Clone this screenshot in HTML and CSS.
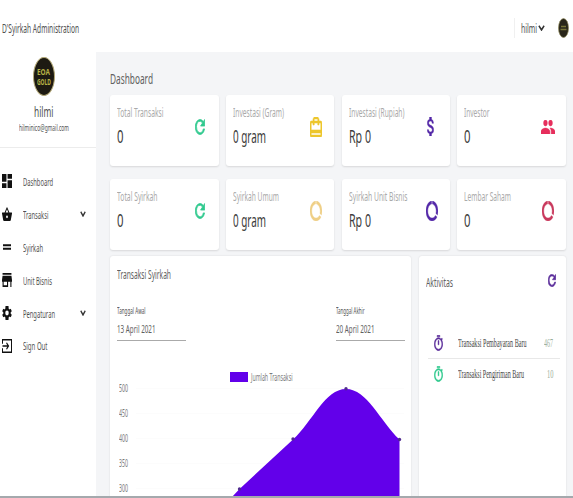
FILE: index.html
```html
<!DOCTYPE html>
<html lang="id">
<head>
<meta charset="utf-8">
<title>D'Syirkah Administration</title>
<link rel="stylesheet" href="styles.css">
</head>
<body>
<svg class="defs" aria-hidden="true">
  <symbol id="refresh" viewBox="3.500 3.500 17 17" preserveAspectRatio="none"><path stroke="currentColor" stroke-width="1" d="M17.65 6.35C16.2 4.9 14.21 4 12 4a8 8 0 1 0 7.73 10h-2.08A6 6 0 1 1 12 6c1.66 0 3.14.69 4.22 1.78L13 11h7V4z"/></symbol>
  <symbol id="ring" viewBox="2 2 20 20" preserveAspectRatio="none"><path stroke="currentColor" stroke-width=".4" d="M12.700 2.05v3.03c3.390.49 6.300 3.390 6.300 6.920 0 .9-.18 1.75-.48 2.54l2.6 1.53c.56-1.24.88-2.62.88-4.07 0-5.18-3.95-9.45-9.300-9.95zM12 19c-3.87 0-7-3.13-7-7 0-3.53 2.61-6.43 6.300-6.920V2.05c-5.360.5-9.300 4.76-9.300 9.950 0 5.52 4.470 10 9.990 10 3.310 0 6.540-1.610 8.360-4.090l-2.600-1.530A6.95 6.95 0 0 1 12 19z"/></symbol>
  <symbol id="bag" viewBox="2 2 20 20" preserveAspectRatio="none"><path fill-rule="evenodd" stroke="currentColor" stroke-width=".7" d="M20 6h-3V4l-2-2H9L7 4v2H4a2 2 0 0 0-2 2v12c0 1.1.9 2 2 2h16a2 2 0 0 0 2-2V8a2 2 0 0 0-2-2zM9 4h6v2H9zm11 15v1H4v-2h16zm0-4H4V8h3v2h2V8h6v2h2V8h3z"/></symbol>
  <symbol id="dollar" viewBox="6 3 11 18" preserveAspectRatio="none"><path stroke="currentColor" stroke-width=".5" d="M11.8 10.9c-2.27-.59-3-1.2-3-2.15 0-1.09 1.01-1.85 2.7-1.85 1.78 0 2.44.85 2.5 2.1h2.21c-.07-1.72-1.12-3.3-3.21-3.81V3h-3v2.16c-1.94.42-3.5 1.68-3.5 3.61 0 2.31 1.91 3.46 4.7 4.13 2.5.6 3 1.48 3 2.41 0 .69-.49 1.79-2.7 1.79-2.06 0-2.87-.92-2.98-2.1H6.32c.12 2.19 1.76 3.42 3.68 3.83V21h3v-2.15c1.95-.37 3.5-1.5 3.5-3.55 0-2.84-2.43-3.81-4.7-4.4z"/></symbol>
  <symbol id="people" viewBox="1 5 22 14" preserveAspectRatio="none"><path stroke="currentColor" stroke-width=".5" d="M16 11a3 3 0 1 0 0-6 3 3 0 0 0 0 6zm-8 0a3 3 0 1 0 0-6 3 3 0 0 0 0 6zm0 2c-2.33 0-7 1.17-7 3.5V19h14v-2.5C15 14.17 10.33 13 8 13zm8 0c-.29 0-.62.02-.97.05 1.16.84 1.97 1.97 1.97 3.45V19h6v-2.5c0-2.33-4.67-3.5-7-3.5z"/></symbol>
  <symbol id="timer" viewBox="2.500 .5 19 22" preserveAspectRatio="none"><path fill-rule="evenodd" stroke="currentColor" stroke-width=".7" d="M15 1H9v2h6zm-4 13h2V8h-2zm8.03-6.61 1.42-1.42c-.43-.51-.9-.99-1.41-1.41l-1.42 1.42A9 9 0 1 0 19.03 7.39zM12 20a7 7 0 1 1 0-14 7 7 0 0 1 0 14z"/></symbol>
  <symbol id="chevron" viewBox="0 0 12 8" preserveAspectRatio="none"><path d="M1.500 1l4.500 5.500L10.500 1" fill="none" stroke="#333" stroke-width="2.600"/></symbol>
</svg>

<header class="topbar">
  <span class="brand fit" data-w="77">D'Syirkah Administration</span>
  <div class="account">
    <span class="fit" data-w="16">hilmi</span>
    <svg class="chev"><use href="#chevron"/></svg>
    <svg class="avatar" viewBox="0 0 11 20"><ellipse cx="5.500" cy="10" rx="5" ry="9.500" fill="#29261a" stroke="#8f8a5c" stroke-width=".7"/><path d="M3 8.500h5M2.500 11.500h6" stroke="#777438" stroke-width="1.500"/></svg>
  </div>
</header>

<div class="shell">
  <aside class="sidebar">
    <div class="profile">
      <div class="logo"><span class="fit" data-w="13">EOA</span><span class="fit" data-w="14">GOLD</span></div>
      <div class="name"><span class="fit" data-w="19.5">hilmi</span></div>
      <div class="mail"><span class="fit" data-w="50">hilminico@gmail.com</span></div>
    </div>
    <nav class="nav">
      <a><svg viewBox="3 3 18 18" preserveAspectRatio="none"><path d="M3 13h8V3H3zm0 8h8v-6H3zm10 0h8V11h-8zm0-18v6h8V3z"/></svg><span class="fit" data-w="30">Dashboard</span></a>
      <a><svg viewBox="1 1 22 20" preserveAspectRatio="none"><path fill-rule="evenodd" d="M17.2 9 12.8 1.8a1 1 0 0 0-1.6 0L6.8 9H2a1 1 0 0 0-1 1.3l2.6 9.2C3.800 20.400 4.600 21 5.500 21h13c.9 0 1.700-.6 1.900-1.500L23 10.300A1 1 0 0 0 22 9zM9 9l3-4.700L15 9zm3 8a2 2 0 1 1 0-4 2 2 0 0 1 0 4z"/></svg><span class="fit" data-w="25.500">Transaksi</span><svg class="chev"><use href="#chevron"/></svg></a>
      <a><svg viewBox="2 2 20 20" preserveAspectRatio="none"><path d="M4 8h16v2.800H4zm0 5.200h16V16H4z"/></svg><span class="fit" data-w="20">Syirkah</span></a>
      <a><svg viewBox="3 4 18 16" preserveAspectRatio="none"><path fill-rule="evenodd" d="M20 4H4v2h16zm1 10v-2l-1-5H4l-1 5v2h1v6h10v-6h4v6h2v-6zm-9 4H6v-4h6z"/></svg><span class="fit" data-w="29">Unit Bisnis</span></a>
      <a><svg viewBox="2 2 20 20" preserveAspectRatio="none"><path fill-rule="evenodd" d="M19.430 12.980a8 8 0 0 0 0-1.960l2.110-1.650-2-3.460-2.490 1a8 8 0 0 0-1.690-.98L15 2H9l-.360 3.930a8 8 0 0 0-1.690.980l-2.490-1-2 3.460 2.110 1.650a8 8 0 0 0 0 1.960l-2.110 1.650 2 3.460 2.490-1a8 8 0 0 0 1.690.980L9 22h6l.360-3.930a8 8 0 0 0 1.690-.980l2.490 1 2-3.460zM12 15.500a3.500 3.500 0 1 1 0-7 3.500 3.500 0 0 1 0 7z"/></svg><span class="fit" data-w="32">Pengaturan</span><svg class="chev"><use href="#chevron"/></svg></a>
      <a><svg viewBox="2 3 20 18" preserveAspectRatio="none"><path d="M3 9V4h18v16H3v-5M3 12h12M11 8l4 4-4 4" fill="none" stroke="#111" stroke-width="2"/></svg><span class="fit" data-w="24.500">Sign Out</span></a>
    </nav>
  </aside>

  <main class="content">
    <h1><span class="fit" data-w="43">Dashboard</span></h1>
    <section class="stats">
      <article class="card"><div><p><span class="fit" data-w="46.500">Total Transaksi</span></p><b><span class="fit" data-w="6.500">0</span></b></div><svg class="turn green"><use href="#refresh"/></svg></article>
      <article class="card"><div><p><span class="fit" data-w="51">Investasi (Gram)</span></p><b><span class="fit" data-w="33">0 gram</span></b></div><svg class="yellow"><use href="#bag"/></svg></article>
      <article class="card"><div><p><span class="fit" data-w="55.500">Investasi (Rupiah)</span></p><b><span class="fit" data-w="22">Rp 0</span></b></div><svg class="usd purple"><use href="#dollar"/></svg></article>
      <article class="card"><div><p><span class="fit" data-w="25.500">Investor</span></p><b><span class="fit" data-w="6.500">0</span></b></div><svg class="group red"><use href="#people"/></svg></article>
      <article class="card"><div><p><span class="fit" data-w="40.500">Total Syirkah</span></p><b><span class="fit" data-w="6.500">0</span></b></div><svg class="turn green"><use href="#refresh"/></svg></article>
      <article class="card"><div><p><span class="fit" data-w="46">Syirkah Umum</span></p><b><span class="fit" data-w="33">0 gram</span></b></div><svg class="sand"><use href="#ring"/></svg></article>
      <article class="card"><div><p><span class="fit" data-w="58.500">Syirkah Unit Bisnis</span></p><b><span class="fit" data-w="22">Rp 0</span></b></div><svg class="purple"><use href="#ring"/></svg></article>
      <article class="card"><div><p><span class="fit" data-w="47">Lembar Saham</span></p><b><span class="fit" data-w="6.500">0</span></b></div><svg class="rose"><use href="#ring"/></svg></article>
    </section>

    <section class="panels">
      <article class="panel chart">
        <h2><span class="fit" data-w="54">Transaksi Syirkah</span></h2>
        <div class="dates">
          <label><small><span class="fit" data-w="28.500">Tanggal Awal</span></small><span class="date"><span class="fit" data-w="38.500">13 April 2021</span></span></label>
          <label><small><span class="fit" data-w="28.500">Tanggal Akhir</span></small><span class="date"><span class="fit" data-w="38.500">20 April 2021</span></span></label>
        </div>
        <div class="legend"><i></i><span class="fit" data-w="41.500">Jumlah Transaksi</span></div>
        <div class="plot">
          <div class="axis"><span class="fit" data-w="9">500</span><span class="fit" data-w="9">450</span><span class="fit" data-w="9">400</span><span class="fit" data-w="9">350</span><span class="fit" data-w="9">300</span></div>
          <svg viewBox="136 382 275 115">
            <path d="M136 388.500H404M136 413.500H404M136 438.500H404M136 463.500H404M136 488.500H404" stroke="#fcfcfc"/>
            <path d="M232 497L239 489.500L293 439.500C313 421 325 389 346 389C367 389 380 421 399.500 439.500V497z" fill="#6200ea"/>
            <g fill="#502a90"><circle cx="239.500" cy="489" r="1.700"/><circle cx="293" cy="439" r="1.700"/><circle cx="346" cy="388.700" r="1.700"/><circle cx="399.500" cy="439.500" r="1.700"/></g>
          </svg>
        </div>
      </article>
      <article class="panel activity">
        <div class="head"><h2><span class="fit" data-w="27">Aktivitas</span></h2><svg class="indigo"><use href="#refresh"/></svg></div>
        <div class="row"><svg class="indigo"><use href="#timer"/></svg><span class="fit" data-w="68.500">Transaksi Pembayaran Baru</span><em><span class="fit" data-w="9">467</span></em></div>
        <div class="row"><svg class="green"><use href="#timer"/></svg><span class="fit" data-w="66">Transaksi Pengiriman Baru</span><em><span class="fit" data-w="6.500">10</span></em></div>
      </article>
    </section>
  </main>
</div>
<footer class="edge"></footer>
<script src="app.js"></script>
</body>
</html>
```
FILE: styles.css
```css
* { box-sizing: border-box; }
body { margin: 0; width: 573px; height: 498px; overflow: hidden; background: #fff; color: #505050; font-family: "Noto Sans", sans-serif; display: flex; flex-direction: column; }
h1, h2, p { margin: 0; font-weight: 400; }
svg { display: block; flex: none; fill: currentColor; }
.defs { width: 0; height: 0; position: absolute; }
.fit { display: inline-block; white-space: nowrap; transform-origin: 0 50%; flex: none; }
.chev { width: 6px; height: 6px; }
.green { color: #2fc98e; }
.yellow { color: #edc72d; }
.purple { color: #5428a8; }
.red { color: #e62e5c; }
.sand { color: #efcf86; }
.rose { color: #c9385c; }
.indigo { color: #5b2d9b; }

.topbar { height: 52px; flex: none; display: flex; justify-content: space-between; align-items: center; padding: 4px 4px 0 2px; font-size: 12px; }
.account { height: 20px; display: flex; align-items: center; border-left: 1px solid #f0f0f0; padding-left: 6px; }
.account .chev { width: 7px; margin-left: 1px; }
.avatar { width: 11px; height: 20px; margin-left: 13px; }

.shell { display: flex; height: 444px; flex: none; }
.sidebar { width: 96px; flex: none; }
.profile { height: 96px; border-bottom: 1px solid #ececec; display: flex; flex-direction: column; align-items: center; padding: 5px 9px 0 0; }
.logo { width: 22px; height: 39px; border-radius: 50%; background: #1d1a12; border: 1px solid #b5aa78; color: #b5b045; font-size: 9px; font-weight: 700; line-height: 10px; display: flex; flex-direction: column; align-items: flex-start; justify-content: center; padding-left: 3px; }
.name { font-size: 14.5px; line-height: 18px; margin-top: 6px; }
.mail { font-size: 9.5px; line-height: 12px; margin-top: 2px; }
.nav { padding: 17px 10px 0 2px; }
.nav a { height: 32.900px; display: flex; align-items: center; font-size: 11.5px; }
.nav a > svg:first-child { width: 10px; height: 14px; margin-right: 11px; fill: #111; }
.nav .chev { margin-left: auto; }

.content { flex: 1; background: #f4f5f7; padding: 0 7px 0 14px; overflow: hidden; }
h1 { font-size: 14.5px; line-height: 20px; padding-top: 16px; height: 43px; color: #606060; }
.stats { display: grid; grid-template-columns: repeat(4, 108.500px); column-gap: 7.300px; row-gap: 13px; }
.card { height: 71px; background: #fff; border-radius: 3px; box-shadow: 0 1px 2px rgba(0,0,0,.12); display: flex; justify-content: space-between; padding: 10px 12px 0 7px; }
.card div { width: 60px; }
.card p { font-size: 12.5px; line-height: 16px; color: #aaa; }
.card b { display: block; font-weight: 400; font-size: 18px; line-height: 24px; margin-top: 3px; color: #3c3c3c; }
.card svg { width: 12px; height: 20px; margin-top: 12px; }
.card .turn { width: 10px; height: 16px; margin: 14px 2px 0 0; }
.card .usd { width: 7px; height: 19px; margin-right: 4px; }
.card .group { width: 14px; height: 14px; margin: 15px -1px 0 0; }

.panels { display: flex; gap: 8px; margin-top: 6px; }
.panel { background: #fff; border-radius: 3px; height: 242px; box-shadow: 0 0 2px rgba(0,0,0,.12); }
.chart { width: 301px; padding: 11px 6px 0 7px; }
h2 { font-size: 12.5px; line-height: 16px; color: #606060; }
.dates { display: flex; justify-content: space-between; margin-top: 22px; }
.dates label { width: 69px; height: 36px; border-bottom: 1px solid #aaa; }
small { display: block; font-size: 9px; line-height: 12px; }
.date { display: block; font-size: 11.500px; line-height: 16px; margin-top: 4px; color: #606060; }
.legend { display: flex; align-items: center; height: 12px; margin: 30px 0 0 113px; font-size: 10px; color: #7c7c7c; }
.legend i { width: 18px; height: 10px; background: #6200ea; margin-right: 3px; }
.plot { display: flex; margin: -1px -6px 0 2px; }
.plot svg { width: 275px; height: 115px; }
.axis { width: 17px; flex: none; font-size: 10px; line-height: 25px; height: 115px; margin-top: -6px; color: #7c7c7c; display: flex; flex-direction: column; align-items: flex-start; }
.activity { width: 147px; padding: 18px 6px 0 7px; }
.head { display: flex; justify-content: space-between; height: 53.500px; }
.head h2 { padding-top: 1px; }
.head svg { width: 8px; height: 13px; margin-right: 4px; }
.row { height: 30.500px; margin-left: 2px; display: flex; align-items: center; padding: 0 7px 0 6px; font: 11.500px "Liberation Serif", serif; color: #444; }
.row + .row { border-top: 1px solid #e8e8e8; }
.row svg { width: 9px; height: 16px; margin-right: 15px; }
.row em { margin-left: auto; font-style: normal; color: #9bb09c; }
.edge { height: 2px; background: #a4a9ad; flex: none; }
```
FILE: app.js
```js
// Condense each label to its column width.
document.querySelectorAll('.fit').forEach(function (el) {
  var natural = el.getBoundingClientRect().width;
  var wanted = Number(el.dataset.w);
  el.style.transform = 'scaleX(' + wanted / natural + ')';
  el.style.marginRight = (wanted - natural) + 'px';
});
```
